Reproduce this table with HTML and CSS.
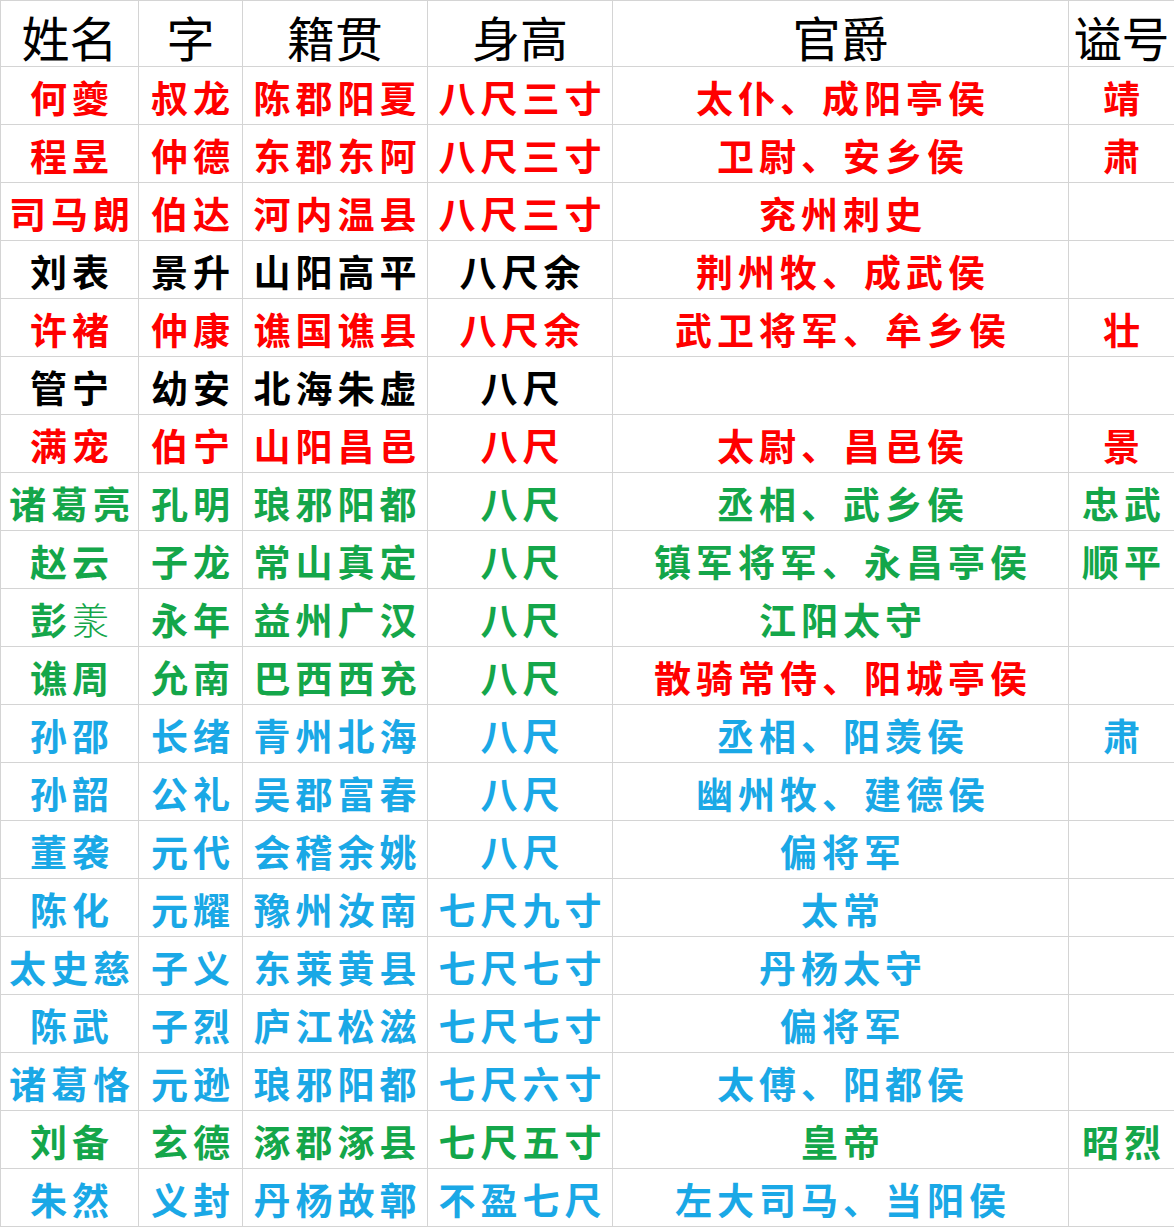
FILE: index.html
```html
<!DOCTYPE html>
<html lang="zh-CN">
<head>
<meta charset="utf-8">
<title>三国人物身高表</title>
<link rel="stylesheet" href="styles.css">
</head>
<body>
<div class="sheet">
  <div class="hd">姓名</div><div class="hd">字</div><div class="hd">籍贯</div><div class="hd">身高</div><div class="hd">官爵</div><div class="hd">谥号</div>

  <div class="c r">何夔</div><div class="c r">叔龙</div><div class="c r">陈郡阳夏</div><div class="c r">八尺三寸</div><div class="c r">太仆、成阳亭侯</div><div class="c r">靖</div>
  <div class="c r">程昱</div><div class="c r">仲德</div><div class="c r">东郡东阿</div><div class="c r">八尺三寸</div><div class="c r">卫尉、安乡侯</div><div class="c r">肃</div>
  <div class="c r">司马朗</div><div class="c r">伯达</div><div class="c r">河内温县</div><div class="c r">八尺三寸</div><div class="c r">兖州刺史</div><div class="c"></div>
  <div class="c k">刘表</div><div class="c k">景升</div><div class="c k">山阳高平</div><div class="c k">八尺余</div><div class="c r">荆州牧、成武侯</div><div class="c"></div>
  <div class="c r">许褚</div><div class="c r">仲康</div><div class="c r">谯国谯县</div><div class="c r">八尺余</div><div class="c r">武卫将军、牟乡侯</div><div class="c r">壮</div>
  <div class="c k">管宁</div><div class="c k">幼安</div><div class="c k">北海朱虚</div><div class="c k">八尺</div><div class="c"></div><div class="c"></div>
  <div class="c r">满宠</div><div class="c r">伯宁</div><div class="c r">山阳昌邑</div><div class="c r">八尺</div><div class="c r">太尉、昌邑侯</div><div class="c r">景</div>
  <div class="c g">诸葛亮</div><div class="c g">孔明</div><div class="c g">琅邪阳都</div><div class="c g">八尺</div><div class="c g">丞相、武乡侯</div><div class="c g">忠武</div>
  <div class="c g">赵云</div><div class="c g">子龙</div><div class="c g">常山真定</div><div class="c g">八尺</div><div class="c g">镇军将军、永昌亭侯</div><div class="c g">顺平</div>
  <div class="c g">彭<span class="thin">羕</span></div><div class="c g">永年</div><div class="c g">益州广汉</div><div class="c g">八尺</div><div class="c g">江阳太守</div><div class="c"></div>
  <div class="c g">谯周</div><div class="c g">允南</div><div class="c g">巴西西充</div><div class="c g">八尺</div><div class="c r">散骑常侍、阳城亭侯</div><div class="c"></div>
  <div class="c b">孙邵</div><div class="c b">长绪</div><div class="c b">青州北海</div><div class="c b">八尺</div><div class="c b">丞相、阳羡侯</div><div class="c b">肃</div>
  <div class="c b">孙韶</div><div class="c b">公礼</div><div class="c b">吴郡富春</div><div class="c b">八尺</div><div class="c b">幽州牧、建德侯</div><div class="c"></div>
  <div class="c b">董袭</div><div class="c b">元代</div><div class="c b">会稽余姚</div><div class="c b">八尺</div><div class="c b">偏将军</div><div class="c"></div>
  <div class="c b">陈化</div><div class="c b">元耀</div><div class="c b">豫州汝南</div><div class="c b">七尺九寸</div><div class="c b">太常</div><div class="c"></div>
  <div class="c b">太史慈</div><div class="c b">子义</div><div class="c b">东莱黄县</div><div class="c b">七尺七寸</div><div class="c b">丹杨太守</div><div class="c"></div>
  <div class="c b">陈武</div><div class="c b">子烈</div><div class="c b">庐江松滋</div><div class="c b">七尺七寸</div><div class="c b">偏将军</div><div class="c"></div>
  <div class="c b">诸葛恪</div><div class="c b">元逊</div><div class="c b">琅邪阳都</div><div class="c b">七尺六寸</div><div class="c b">太傅、阳都侯</div><div class="c"></div>
  <div class="c g">刘备</div><div class="c g">玄德</div><div class="c g">涿郡涿县</div><div class="c g">七尺五寸</div><div class="c g">皇帝</div><div class="c g">昭烈</div>
  <div class="c b">朱然</div><div class="c b">义封</div><div class="c b">丹杨故鄣</div><div class="c b">不盈七尺</div><div class="c b">左大司马、当阳侯</div><div class="c"></div>
</div>
</body>
</html>
```

FILE: styles.css
```css
html, body {
  margin: 0;
  padding: 0;
  background: #ffffff;
}

.sheet {
  display: grid;
  grid-template-columns: 137px 103px 184px 184px 455px 105px;
  grid-template-rows: 65px repeat(20, 57px);
  gap: 1px;
  padding: 1px;
  width: 1174px;
  box-sizing: border-box;
  background: #d4d4d4;
  font-family: "Noto Sans CJK SC", "Noto Sans", sans-serif;
}

.sheet > div {
  background: #ffffff;
  display: flex;
  align-items: center;
  justify-content: center;
  white-space: nowrap;
  overflow: visible;
}

.hd {
  font-size: 48px;
  font-weight: 400;
  color: #000000;
  padding-top: 4px;
  box-sizing: border-box;
}

.c {
  font-size: 37px;
  font-weight: 700;
  letter-spacing: 5px;
  padding-left: 5px;
  padding-top: 2px;
  box-sizing: border-box;
}

.r { color: #ff0000; }
.g { color: #14a64a; }
.b { color: #1aa8e6; }
.k { color: #000000; }

.thin { font-weight: 300; }
```
